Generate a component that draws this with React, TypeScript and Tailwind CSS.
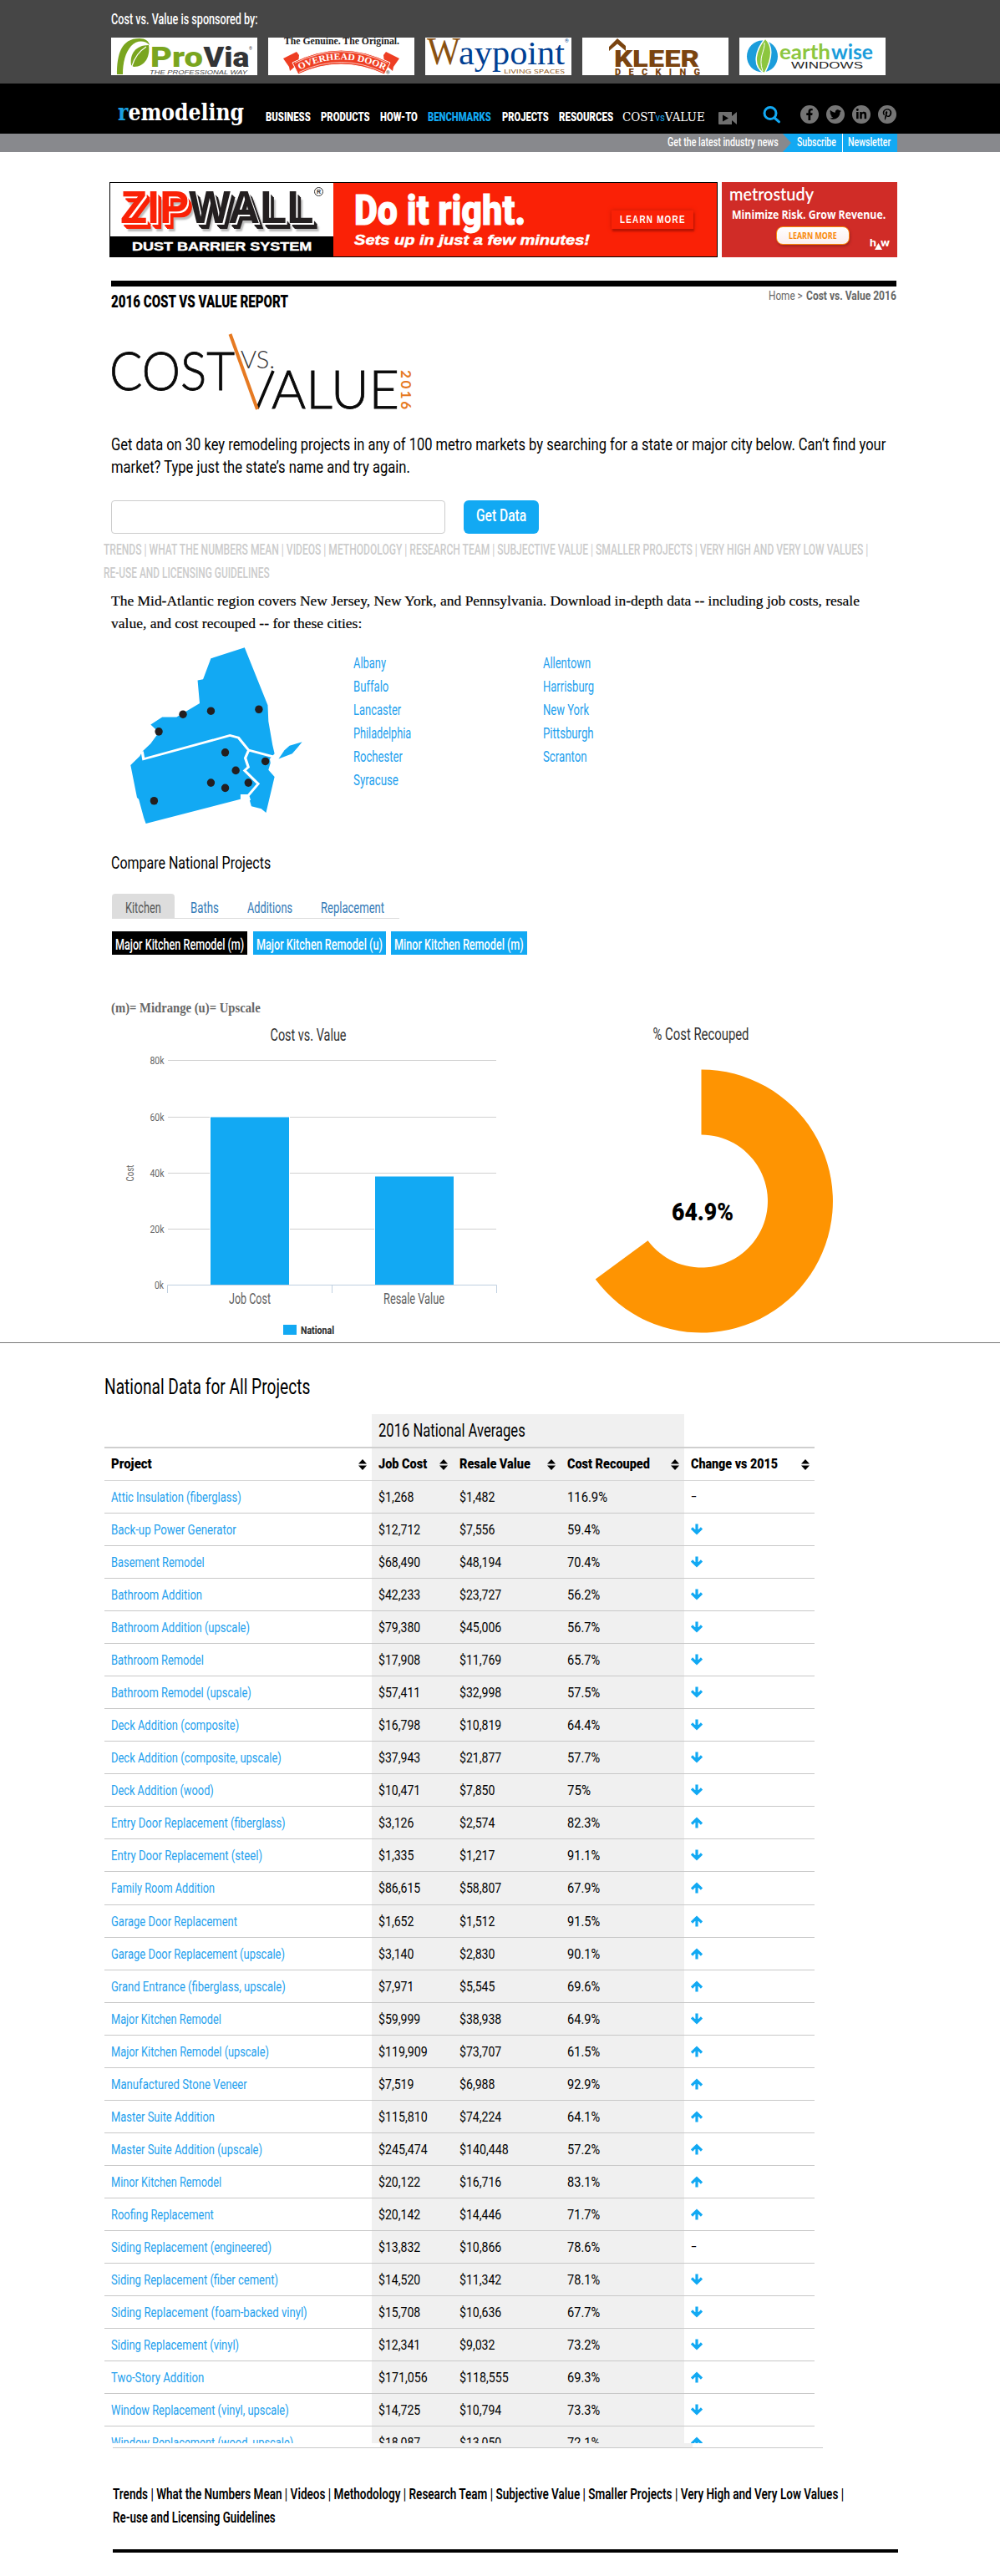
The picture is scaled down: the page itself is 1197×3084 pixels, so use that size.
import { useLayoutEffect, useRef, useState } from "react";
import type { ReactNode } from "react";
import { FaFacebookF, FaTwitter, FaLinkedinIn, FaPinterestP } from "react-icons/fa";

/* Condensed single-line text: squeezes the glyphs so the line is exactly w px wide. */
function Fit({ w, className = "", children }: { w: number; className?: string; children: ReactNode }) {
  const ref = useRef<HTMLSpanElement>(null);
  const [k, setK] = useState(1);
  useLayoutEffect(() => {
    if (ref.current && ref.current.offsetWidth) setK(w / ref.current.offsetWidth);
  }, [w]);
  return (
    <span className={`inline-block whitespace-nowrap align-top ${className}`} style={{ width: w }}>
      <span ref={ref} className="inline-block origin-left" style={{ transform: `scaleX(${k})` }}>
        {children}
      </span>
    </span>
  );
}

type TxtProps = {
  x: number;
  y: number;
  w?: number;
  size: number;
  fill: string;
  weight?: number;
  font?: string;
  italic?: boolean;
  children: string;
};
function Txt({ x, y, w, size, fill, weight = 400, font = "Roboto, sans-serif", italic, children }: TxtProps) {
  return (
    <text x={x} y={y} fontSize={size} fill={fill} fontWeight={weight} fontFamily={font} fontStyle={italic ? "italic" : undefined} textLength={w} lengthAdjust="spacingAndGlyphs">
      {children}
    </text>
  );
}

const ARIAL = "'Liberation Sans', sans-serif";
const SERIF = "'Liberation Serif', serif";

function Sponsors() {
  return (
    <div className="mt-3 flex gap-[13px]">
      <svg width="175" height="45" className="bg-white">
        <path d="M7 44 C7 20 12 1 34 1 C41 1 45 4 46 9 C40 3 31 3 24 10 C17 18 14 30 14 44 Z" fill="#7aa51f" />
        <path d="M24 33 C22 20 29 9 45 9 C47 22 41 35 27 35 Z" fill="#7aa51f" />
        <path d="M25 34 C28 24 34 16 42 11" stroke="#fff" strokeWidth="1.2" fill="none" />
        <Txt x={47} y={34.5} w={63} size={33} fill="#7aa51f" weight={900}>Pro</Txt>
        <Txt x={110.500} y={34.5} w={55} size={33} fill="#333436" weight={900}>Via</Txt>
        <Txt x={46} y={43.5} w={117} size={8} fill="#444" font={ARIAL} italic>THE PROFESSIONAL WAY</Txt>
        <Txt x={165} y={15} size={5} fill="#444">®</Txt>
      </svg>
      <svg width="175" height="45" className="bg-white">
        <Txt x={19} y={8} w={138} size={12} fill="#222" weight={700} font={SERIF}>The Genuine. The Original.</Txt>
        <path d="M18 25 L34 17 L37 21 L36 31 L26 40 L25 35 Z M157 25 L141 17 L138 21 L139 31 L149 40 L150 35 Z" fill="#ee3e23" />
        <path d="M29 30 Q87 0 146 30 L139 44 Q87 20 36 44 Z" fill="#ee3e23" stroke="#fff" strokeWidth="1" />
        <path d="M32 30.5 Q87 3 143 30.5 M37 41.5 Q87 17.500 138 41.500" fill="none" stroke="#fff" strokeWidth=".7" />
        <path id="arc" d="M37.500 38.500 Q87 14 138 38.500" fill="none" />
        <text fontSize="11" fontWeight="700" fill="#fff" fontFamily={SERIF}>
          <textPath href="#arc" textLength="106" lengthAdjust="spacingAndGlyphs">OVERHEAD DOOR</textPath>
        </text>
        <Txt x={141} y={44} size={6} fill="#333">®</Txt>
      </svg>
      <svg width="175" height="45" className="bg-white">
        <Txt x={2} y={32} w={40} size={46} fill="#8a5110" font={SERIF}>W</Txt>
        <Txt x={40} y={32} w={127} size={40} fill="#003f93" font={SERIF}>aypoint</Txt>
        <Txt x={94} y={43} w={73} size={8} fill="#8a5110" weight={500} font="'Open Sans', sans-serif">LIVING SPACES</Txt>
        <Txt x={167} y={6} size={6} fill="#003f93">®</Txt>
      </svg>
      <svg width="175" height="45" className="bg-white">
        <path d="M32 11 L42 1 L52 10 V16 L42 7.500 L32 16 Z" fill="#7a4410" />
        <Txt x={38} y={35} w={102} size={27} fill="#7a4410" weight={900}>KLEER</Txt>
        <text x="39" y="45" fontSize="11" fontWeight="900" fill="#7a4410" fontFamily="Roboto, sans-serif" textLength="102">DECKING</text>
      </svg>
      <svg width="175" height="45" className="bg-white">
        <ellipse cx="27.500" cy="22.500" rx="18.500" ry="19" fill="#1b9ddb" />
        <path d="M31 1 C42 12 38 28 30 43 C14 34 20 14 31 1 Z" fill="#8cc63f" stroke="#fff" strokeWidth="1.500" />
        <path d="M30 6 C31 16 22 24 28 40" fill="none" stroke="#fff" strokeWidth="1" />
        <Txt x={48} y={26} w={61} size={25} fill="#8cc63f" weight={700} font="Lato, sans-serif">earth</Txt>
        <Txt x={110} y={26} w={50} size={25} fill="#1b9ddb" weight={700} font="Lato, sans-serif">wise</Txt>
        <Txt x={62} y={37} w={86} size={11} fill="#222" weight={500} font={ARIAL}>WINDOWS</Txt>
      </svg>
    </div>
  );
}

const social = [
  { Icon: FaFacebookF, id: "f" },
  { Icon: FaTwitter, id: "t" },
  { Icon: FaLinkedinIn, id: "l" },
  { Icon: FaPinterestP, id: "p" },
];

function Header() {
  return (
    <header>
      <div className="h-[100px] bg-[#464646] pl-[133px] pt-[13px]">
        <div className="h-5 text-[17.500px] leading-5 text-white">
          <Fit w={176} className="font-medium">Cost vs. Value is sponsored by:</Fit>
        </div>
        <Sponsors />
      </div>
      <div className="flex h-[60px] bg-black text-[15.500px] font-black leading-5 text-white">
        <div className="ml-[141px] mt-[19px] w-[177px] font-['DejaVu_Serif'] text-[27px] leading-8">
          <Fit w={151} className="font-bold"><span className="text-[#1ba0e2]">r</span>emodeling</Fit>
        </div>
        <nav className="mt-[30px] flex h-5">
          <Fit w={54} className="mr-[12px]">BUSINESS</Fit>
          <Fit w={59} className="mr-[12px]">PRODUCTS</Fit>
          <Fit w={45} className="mr-[12px]">HOW-TO</Fit>
          <Fit w={76} className="mr-[13px] text-[#12a9f3]">BENCHMARKS</Fit>
          <Fit w={56} className="mr-[12px]">PROJECTS</Fit>
          <Fit w={65} className="mr-[11px]">RESOURCES</Fit>
          <Fit w={99} className="font-['DejaVu_Serif'] font-normal">
            COST<span className="font-[Roboto] text-[13px] text-[#1ba0e2]">vs</span>VALUE
          </Fit>
        </nav>
        <svg width="22" height="15" viewBox="0 0 22 15" className="ml-4 mt-[34px]">
          <path d="M1 0 H16 V5 L22 0 V15 L16 10 V15 H1 Q0 15 0 14 V1 Q0 0 1 0 Z" fill="#6f6f6f" />
          <path d="M5 3.500 L12 7.500 L5 11.500 Z" fill="#000" />
        </svg>
        <svg width="22" height="21" viewBox="0 0 22 21" className="ml-[31px] mt-[27px]" fill="none" stroke="#12a9f3" strokeWidth="3">
          <circle cx="9" cy="8.500" r="7" />
          <path d="M14 14 L19.500 18.800" strokeLinecap="round" />
        </svg>
        <div className="ml-[23px] mt-[26px] flex gap-[9px] text-black">
          {social.map(({ Icon, id }) => (
            <span key={id} className="flex size-[22px] items-center justify-center rounded-full bg-[#757575]">
              <Icon size={14} />
            </span>
          ))}
        </div>
      </div>
      <div className="flex h-[22px] bg-[#88898d] pl-[799px] text-[14.500px] font-medium leading-[22px] text-white">
        <Fit w={133} className="mr-[5px]">Get the latest industry news</Fit>
        <div className="h-[22px] w-[71px] bg-[#12a9f3] pl-[17px] [clip-path:polygon(0_0,100%_0,100%_100%,0_100%,10px_50%)]">
          <Fit w={47}>Subscribe</Fit>
        </div>
        <div className="h-[22px] w-[66px] border-l border-white bg-[#12a9f3] pl-[6px]">
          <Fit w={51}>Newsletter</Fit>
        </div>
      </div>
    </header>
  );
}

function Ads() {
  return (
    <div className="ml-[131px] mt-9 flex h-[90px]">
      <div className="flex w-[728px] border border-black bg-[#fa2106]">
        <div className="flex w-[267px] flex-col bg-black">
          <div className="relative flex h-16 bg-white pl-[12px] font-['Liberation_Sans'] text-[56px] font-bold leading-[57px]">
            <Fit w={82} className="text-[#fa2106] [text-shadow:1px_1px_0_#fff,2px_2px_0_#fff,3px_4px_0_#fa2106,4px_5px_0_#fa2106,5px_6px_0_#fa2106,6px_7px_0_#fa2106,8px_10px_2px_#bbb]">ZIP</Fit>
            <Fit w={150} className="text-[#231f20] [text-shadow:1px_1px_0_#fff,2px_2px_0_#fff,3px_4px_0_#231f20,4px_5px_0_#231f20,5px_6px_0_#231f20,6px_7px_0_#231f20,8px_10px_2px_#bbb]">WALL</Fit>
            <span className="absolute left-[244px] top-[5px] flex size-[11px] items-center justify-center rounded-full border border-[#333] text-[7px] leading-none text-[#333]">R</span>
          </div>
          <div className="pl-[26px] pt-[2px] font-['Liberation_Sans'] text-[14px] font-bold leading-5 text-white [-webkit-text-stroke:0.4px_#fff]">
            <Fit w={215}>DUST BARRIER SYSTEM</Fit>
          </div>
        </div>
        <div className="w-[309px] pl-[25px] pt-[3px] text-white">
          <div className="h-[56px] text-[50px] font-black leading-[60px] [-webkit-text-stroke:1px_#fff]"><Fit w={205}>Do it right.</Fit></div>
          <div className="h-5 font-['Liberation_Sans'] text-[17px] font-bold italic leading-5 [-webkit-text-stroke:0.5px_#fff]"><Fit w={282}>Sets up in just a few minutes!</Fit></div>
        </div>
        <div className="ml-6 mt-[33px] h-[22px] w-[98px] bg-[#fa2106] pl-[10px] font-['Liberation_Sans'] text-[12px] font-bold leading-[23px] text-white shadow-[1px_3px_2px_#b81404,0_0_5px_#c91a06]">
          <Fit w={79}><span className="tracking-[1.500px]">LEARN MORE</span></Fit>
        </div>
      </div>
      <div className="relative ml-[5px] w-[210px] bg-[#d02c27] text-white">
        <div className="h-[29px] pl-[9px] font-[Lato] text-[21px] font-semibold leading-[27px]"><Fit w={101}>metrostudy</Fit></div>
        <div className="h-[24px] pl-3 font-['Open_Sans'] text-[13.500px] font-bold leading-[20px]"><Fit w={184}>Minimize Risk. Grow Revenue.</Fit></div>
        <div className="ml-[65px] h-[22px] w-[88px] rounded-lg border border-[#f98a0a] bg-gradient-to-b from-white to-[#fbeeee] pl-[14px] font-['Open_Sans'] text-[11px] font-bold leading-5 text-[#f98a0a] shadow-[1px_2px_3px_#a32421]">
          <Fit w={58}>LEARN MORE</Fit>
        </div>
        <svg width="25" height="14" className="absolute left-[177px] top-[68px]">
          <Txt x={0} y={9} w={8} size={12} fill="#fff" weight={700}>h</Txt>
          <path d="M6 13 L10.500 5 L15 13 Z" fill="#fff" />
          <Txt x={13} y={9} w={11} size={12} fill="#fff" weight={700}>w</Txt>
        </svg>
      </div>
    </div>
  );
}

function CostValueLogo() {
  const lato = "Lato, sans-serif";
  return (
    <svg width="364" height="96" className="ml-[132px]">
      <g stroke="#0a0a0a" strokeWidth="0.8">
        <Txt x={-1} y={69} w={150} size={64} fill="#0a0a0a" weight={300} font={lato}>COST</Txt>
        <Txt x={193} y={91} w={153} size={63} fill="#0a0a0a" weight={300} font={lato}>ALUE</Txt>
      </g>
      <Txt x={156} y={43} w={41} size={29} fill="#333" weight={300} font={lato}>VS.</Txt>
      <path d="M176 91 L195 46" stroke="#0a0a0a" strokeWidth="3.600" />
      <path d="M143.500 2 L176 92" stroke="#e67a22" strokeWidth="4" />
      <g transform="translate(347.500 45) rotate(90)">
        <text x="0" y="0" fontSize="17" fill="#e67a22" fontWeight="700" fontFamily={lato} textLength="47">2016</text>
      </g>
    </svg>
  );
}

const dots = [[490, 447], [349, 453], [267, 465], [196, 527], [391, 602], [509, 634], [422, 667], [349, 711], [391, 730], [459, 711], [182, 776]];

function RegionMap() {
  return (
    <svg width="220" height="218" viewBox="100 215 540 655" preserveAspectRatio="none">
      <path fill="#12a9f3" d="M448 225 L516 432 L518 490 L530 575 L536 606 L522 625 L524 640 L518 665 L536 690 L511 819 L497 805 L468 796 L460 762 L458 753 L436 753 L436 770 L158 858 L152 838 L137 770 L132 765 L113 648 L140 615 L148 598 L172 570 L196 530 L172 502 L206 475 L248 475 L316 425 L310 343 L326 339 L349 264 Z" />
      <path fill="#12a9f3" d="M548 625 L565 594 L580 578 L617 564 L603 585 L588 606 Z" />
      <path fill="none" stroke="#fff" strokeWidth="8" d="M147 598 L151 626 L405 541 L430 549 L460 594 L534 618 M460 594 L450 622 L459 655 L448 667 L488 715 L458 758 L462 775" />
      {dots.map(([x, y]) => <ellipse key={`${x}-${y}`} cx={x} cy={y} rx="11.500" ry="14.500" fill="#231f20" />)}
    </svg>
  );
}

const cities: [string, number][][] = [
  [["Albany", 39], ["Buffalo", 42], ["Lancaster", 57], ["Philadelphia", 69], ["Rochester", 59], ["Syracuse", 54]],
  [["Allentown", 57], ["Harrisburg", 61], ["New York", 55], ["Pittsburgh", 61], ["Scranton", 53]],
];

function BarChart() {
  return (
    <svg width="470" height="374" className="absolute left-[133px] top-0">
      <Txt x={190.500} y={19.500} w={91} size={20} fill="#333">Cost vs. Value</Txt>
      {[43.500, 111.500, 178.500, 245.500].map((y, i) => (
        <g key={y}>
          <path d={`M68 ${y} H461`} stroke="#d0d0d0" />
          <Txt x={46.500} y={y + 4.500} w={17} size={13.500} fill="#666">{`${80 - i * 20}k`}</Txt>
        </g>
      ))}
      <Txt x={52} y={316.500} w={11} size={13.500} fill="#666">0k</Txt>
      <rect x="118.500" y="111" width="95" height="202" fill="#12a9f3" stroke="#fff" />
      <rect x="315.500" y="182" width="95" height="131" fill="#12a9f3" stroke="#fff" />
      <path d="M67.500 322 V312.500 H461.500 V322 M264.500 312.500 V322" fill="none" stroke="#c0d0e0" />
      <g transform="translate(27 188.500) rotate(-90)"><Txt x={0} y={0} w={20} size={13.500} fill="#666">Cost</Txt></g>
      <Txt x={141} y={335} w={50} size={17.500} fill="#606060">Job Cost</Txt>
      <Txt x={326} y={335} w={73} size={17.500} fill="#606060">Resale Value</Txt>
      <rect x="206" y="360" width="16" height="12" fill="#12a9f3" />
      <Txt x={227} y={371} w={40} size={13.500} fill="#333" weight={800}>National</Txt>
    </svg>
  );
}

function Donut() {
  return (
    <svg width="290" height="374" className="absolute left-[710px] top-0">
      <Txt x={71.500} y={19} w={115} size={20} fill="#333">% Cost Recouped</Txt>
      <path d="M129.500 54.500 A157.500 157.500 0 1 1 2.700 305.500 L65.500 259.200 A79.500 79.500 0 1 0 129.500 132.500 Z" fill="#fe9402" />
      <Txt x={94} y={234.500} w={74} size={30} fill="#000" weight={900}>64.9%</Txt>
    </svg>
  );
}

type Row = [string, number, string, string, string, string];
const rows: Row[] = [
  ["Attic Insulation (fiberglass)", 156, "$1,268", "$1,482", "116.9%", "-"],
  ["Back-up Power Generator", 150, "$12,712", "$7,556", "59.4%", "d"],
  ["Basement Remodel", 112, "$68,490", "$48,194", "70.4%", "d"],
  ["Bathroom Addition", 109, "$42,233", "$23,727", "56.2%", "d"],
  ["Bathroom Addition (upscale)", 166, "$79,380", "$45,006", "56.7%", "d"],
  ["Bathroom Remodel", 111, "$17,908", "$11,769", "65.7%", "d"],
  ["Bathroom Remodel (upscale)", 168, "$57,411", "$32,998", "57.5%", "d"],
  ["Deck Addition (composite)", 153, "$16,798", "$10,819", "64.4%", "d"],
  ["Deck Addition (composite, upscale)", 204, "$37,943", "$21,877", "57.7%", "d"],
  ["Deck Addition (wood)", 123, "$10,471", "$7,850", "75%", "d"],
  ["Entry Door Replacement (fiberglass)", 209, "$3,126", "$2,574", "82.3%", "u"],
  ["Entry Door Replacement (steel)", 181, "$1,335", "$1,217", "91.1%", "d"],
  ["Family Room Addition", 124, "$86,615", "$58,807", "67.9%", "u"],
  ["Garage Door Replacement", 151, "$1,652", "$1,512", "91.5%", "u"],
  ["Garage Door Replacement (upscale)", 208, "$3,140", "$2,830", "90.1%", "u"],
  ["Grand Entrance (fiberglass, upscale)", 209, "$7,971", "$5,545", "69.6%", "u"],
  ["Major Kitchen Remodel", 132, "$59,999", "$38,938", "64.9%", "d"],
  ["Major Kitchen Remodel (upscale)", 189, "$119,909", "$73,707", "61.5%", "u"],
  ["Manufactured Stone Veneer", 163, "$7,519", "$6,988", "92.9%", "u"],
  ["Master Suite Addition", 124, "$115,810", "$74,224", "64.1%", "u"],
  ["Master Suite Addition (upscale)", 181, "$245,474", "$140,448", "57.2%", "u"],
  ["Minor Kitchen Remodel", 132, "$20,122", "$16,716", "83.1%", "u"],
  ["Roofing Replacement", 123, "$20,142", "$14,446", "71.7%", "u"],
  ["Siding Replacement (engineered)", 192, "$13,832", "$10,866", "78.6%", "-"],
  ["Siding Replacement (fiber cement)", 200, "$14,520", "$11,342", "78.1%", "d"],
  ["Siding Replacement (foam-backed vinyl)", 235, "$15,708", "$10,636", "67.7%", "d"],
  ["Siding Replacement (vinyl)", 153, "$12,341", "$9,032", "73.2%", "d"],
  ["Two-Story Addition", 111, "$171,056", "$118,555", "69.3%", "u"],
  ["Window Replacement (vinyl, upscale)", 213, "$14,725", "$10,794", "73.3%", "d"],
  ["Window Replacement (wood, upscale)", 218, "$18,087", "$13,050", "72.1%", "u"],
];

const headers: [string, number][] = [["Project", 49], ["Job Cost", 58], ["Resale Value", 85], ["Cost Recouped", 99], ["Change vs 2015", 104]];

function Change({ dir }: { dir: string }) {
  if (dir === "-") return <Fit w={7}>–</Fit>;
  return (
    <svg width="14" height="14" viewBox="0 0 14 14" className={dir === "u" ? "rotate-180" : ""} fill="none" stroke="#12a9f3" strokeWidth="3.2">
      <path d="M7 0.500 V11" />
      <path d="M1 5.500 L7 11.300 L13 5.500" />
      <path d="M3 7 H11 L7 12 Z" fill="#12a9f3" stroke="none" />
    </svg>
  );
}

function DataTable() {
  return (
    <section className="ml-[125px]">
      <h2 className="mt-[37px] h-[30px] text-[26px] leading-[30px]"><Fit w={246}>National Data for All Projects</Fit></h2>
      <div className="mt-[18px] w-[850px] text-[16.500px]">
        <div className="h-[41px] border-b-2 border-[#cfcfcf]">
          <div className="ml-[320px] h-[39px] w-[374px] bg-[#f0f0f0] pl-2 text-[21.500px] leading-[39px]"><Fit w={176}>2016 National Averages</Fit></div>
        </div>
        <div className="grid h-[39px] grid-cols-[320px_97px_129px_148px_156px] border-b border-[#d6d6d6] font-black leading-[38px]">
          {headers.map(([label, w], i) => (
            <div key={label} className={`flex items-center justify-between pl-2 pr-[6.500px] ${i > 0 && i < 4 ? "bg-[#f0f0f0]" : ""}`}>
              <Fit w={w}>{label}</Fit>
              <svg width="10" height="13" className="shrink-0"><path d="M0 5.500 L5 0 L10 5.500 Z M0 7.500 H10 L5 13 Z" /></svg>
            </div>
          ))}
        </div>
        {rows.map(([name, w, cost, resale, pct, dir], i) => (
          <div key={name} className={`grid grid-cols-[320px_97px_129px_148px_156px] overflow-hidden text-[17px] leading-[38px] ${i === 29 ? "h-5" : i === 12 ? "h-10 border-b border-[#c8c8c8]" : "h-[39px] border-b border-[#c8c8c8]"}`}>
            <div className="pl-2 text-[#239fee]"><Fit w={w}>{name}</Fit></div>
            <div className="bg-[#f0f0f0] pl-2"><Fit w={cost.length * 8.100 - 6.200}>{cost}</Fit></div>
            <div className="bg-[#f0f0f0] pl-2"><Fit w={resale.length * 8.100 - 6.200}>{resale}</Fit></div>
            <div className="bg-[#f0f0f0] pl-2"><Fit w={pct === "75%" ? 28.500 : pct.length * 8.400 - 2.500}>{pct}</Fit></div>
            <div className="flex h-[38px] items-center pl-2"><Change dir={dir} /></div>
          </div>
        ))}
      </div>
      <div className="ml-[10px] h-[6px] w-[850px] border-b border-[#c8c8c8]">
        <div className="ml-[320px] h-[5px] w-[374px] bg-[#f0f0f0]" />
      </div>
    </section>
  );
}

const LINKS = "Trends | What the Numbers Mean | Videos | Methodology | Research Team | Subjective Value | Smaller Projects | Very High and Very Low Values |";

export default function App() {
  return (
    <div className="h-[3084px] w-[1197px] overflow-hidden bg-white font-[Roboto,sans-serif] text-black">
      <Header />
      <Ads />
      <div className="ml-[133px] mt-7 h-[7px] w-[940px] bg-black" />
      <div className="ml-[133px] flex h-[55px] w-[940px] justify-between">
        <div className="pt-2 text-[20px] font-black leading-[20px]"><Fit w={212}>2016 COST VS VALUE REPORT</Fit></div>
        <div className="flex pt-[1px] text-[15.500px] leading-5 text-[#666]">
          <Fit w={41} className="mr-1">Home &gt;</Fit>
          <Fit w={108} className="font-bold">Cost vs. Value 2016</Fit>
        </div>
      </div>
      <CostValueLogo />
      <p className="ml-[133px] mt-[25px] text-[21px] leading-[27px]">
        <Fit w={927}>Get data on 30 key remodeling projects in any of 100 metro markets by searching for a state or major city below. Can’t find your</Fit>
        <Fit w={358}>market? Type just the state’s name and try again.</Fit>
      </p>
      <div className="ml-[133px] mt-[26px] flex h-10">
        <input aria-label="City or state" className="w-[400px] rounded border border-[#ccc]" />
        <button className="ml-[22px] w-[90px] rounded-md bg-[#12a9f3] pb-[2px] text-[21px] font-medium text-white"><Fit w={60}>Get Data</Fit></button>
      </div>
      <div className="ml-[124px] mt-[5px] text-[18px] font-medium uppercase leading-[28px] text-[#ccc]">
        <Fit w={915}>{LINKS}</Fit>
        <br />
        <Fit w={199}>Re-use and Licensing Guidelines</Fit>
      </div>
      <p className="ml-[133px] mt-[6px] font-['Liberation_Serif'] text-[17.500px] leading-[27px] [-webkit-text-stroke:0.2px_#000]">
        <Fit w={896}>The Mid-Atlantic region covers New Jersey, New York, and Pennsylvania. Download in-depth data -- including job costs, resale</Fit>
        <br />
        <Fit w={300}>value, and cost recouped -- for these cities:</Fit>
      </p>
      <div className="ml-[151px] mt-[12px] flex h-[218px]">
        <RegionMap />
        {cities.map((col) => (
          <ul key={col[0][0]} className={`mt-2 w-[227px] text-[17.500px] leading-[28px] text-[#239fee] ${col.length === 6 ? "ml-[52px]" : ""}`}>
            {col.map(([c, w]) => <li key={c} className="h-[28px]"><Fit w={w}>{c}</Fit></li>)}
          </ul>
        ))}
      </div>
      <h3 className="ml-[133px] mt-[31px] h-6 text-[21px] leading-6"><Fit w={191}>Compare National Projects</Fit></h3>
      <div className="ml-[134px] mt-[25px] flex h-[30px] w-[344px] border-b border-[#ddd] text-[17.500px] leading-[34px] text-[#337ab7]">
        <div className="w-[75px] rounded-t bg-[#ddd] pl-4 text-[#555]"><Fit w={43}>Kitchen</Fit></div>
        <Fit w={34} className="ml-[19px] mr-[34px]">Baths</Fit>
        <Fit w={54} className="mr-[34px]">Additions</Fit>
        <Fit w={76}>Replacement</Fit>
      </div>
      <div className="ml-[134px] mt-[15px] flex h-[28px] text-[17.500px] font-medium leading-[32px] text-white">
        <div className="mr-[7px] w-[162px] bg-black pl-1"><Fit w={154}>Major Kitchen Remodel (m)</Fit></div>
        <div className="mr-[6px] w-[159px] bg-[#12a9f3] pl-1"><Fit w={151}>Major Kitchen Remodel (u)</Fit></div>
        <div className="w-[163px] bg-[#12a9f3] pl-1"><Fit w={155}>Minor Kitchen Remodel (m)</Fit></div>
      </div>
      <div className="ml-[133px] mt-[54px] h-[29px] font-['Liberation_Serif'] text-[16px] font-bold leading-[20px] text-[#666]"><Fit w={179}>(m)= Midrange (u)= Upscale</Fit></div>
      <div className="relative h-[382px] border-b border-[#777]">
        <BarChart />
        <Donut />
      </div>
      <DataTable />
      <footer className="ml-[135px] mt-[41px] w-[940px] text-[17.500px] font-semibold leading-[28px]">
        <Fit w={875}>{LINKS}</Fit>
        <br />
        <Fit w={195}>Re-use and Licensing Guidelines</Fit>
        <div className="mt-[24px] h-1 bg-black" />
      </footer>
    </div>
  );
}
